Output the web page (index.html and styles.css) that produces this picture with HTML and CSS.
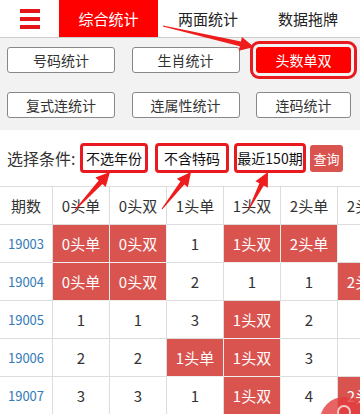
FILE: index.html
```html
<!DOCTYPE html>
<html>
<head>
<meta charset="utf-8"/>
<meta name="viewport" content="width=device-width, initial-scale=1.0"/>
<title>头数单双</title>
<link rel="stylesheet" href="styles.css">
</head>
<body>
<div id="page">

<div id="nav">
  <div class="menu"><i></i><i></i><i></i></div>
  <div class="tab on">综合统计</div>
  <div class="tab t2">两面统计</div>
  <div class="tab t3">数据拖牌</div>
</div>

<div id="btns">
  <div class="btn">号码统计</div>
  <div class="btn">生肖统计</div>
  <div class="btn cur">头数单双</div>
  <div class="btn">复式连统计</div>
  <div class="btn">连属性统计</div>
  <div class="btn">连码统计</div>
</div>

<div id="filter">
  <span class="lbl">选择条件:</span>
  <span class="sel s1">不选年份</span>
  <span class="sel s2">不含特码</span>
  <span class="sel s3">最近150期</span>
  <span class="go">查询</span>
</div>

<table id="tbl">
  <tr><th class="q">期数</th><th>0头单</th><th>0头双</th><th>1头单</th><th>1头双</th><th>2头单</th><th>2头双</th></tr>
  <tr><td class="q">19003</td><td class="r">0头单</td><td class="r">0头双</td><td>1</td><td class="r">1头双</td><td class="r">2头单</td><td>1</td></tr>
  <tr><td class="q">19004</td><td class="r">0头单</td><td class="r">0头双</td><td>2</td><td>1</td><td>1</td><td class="r">2头双</td></tr>
  <tr><td class="q">19005</td><td>1</td><td>1</td><td>3</td><td class="r">1头双</td><td>2</td><td>1</td></tr>
  <tr><td class="q">19006</td><td>2</td><td>2</td><td class="r">1头单</td><td class="r">1头双</td><td>3</td><td>2</td></tr>
  <tr><td class="q">19007</td><td>3</td><td>3</td><td>1</td><td class="r">1头双</td><td>4</td><td class="r">2头双</td></tr>
</table>

<!-- annotation arrows -->
<svg id="arrows" width="360" height="414" viewBox="0 0 360 414">
  <polygon points="162.9,26.5 239.8,46.3 238.8,50.7 254,47 241.9,37.0 240.9,41.4 163.1,25.5"/>
  <polygon points="75.4,210.3 102.4,184.0 105.7,187.0 110,172 95.4,177.6 98.7,180.6 74.6,209.7"/>
  <polygon points="162.4,209.3 184.3,184.6 187.9,187.3 191,172 176.9,178.7 180.4,181.5 161.6,208.7"/>
  <polygon points="249.4,209.2 263.8,185.6 267.8,187.7 268,172 255.4,181.3 259.4,183.3 248.6,208.8"/>
</svg>

<div id="fab"><span></span></div>

</div>
</body>
</html>
```
FILE: styles.css
```css
body {
  margin: 0;
  font-family: "Noto Sans CJK SC", "Noto Sans", sans-serif;
  color: #333;
}
#page {
  position: relative;
  width: 360px;
  height: 414px;
  overflow: hidden;
  background: #fff;
}

/* top nav */
#nav {
  display: flex;
  height: 37px;
  border-bottom: 1px solid #ccc;
}
#nav .menu {
  width: 59px;
  display: flex;
  flex-direction: column;
  align-items: center;
  justify-content: center;
  gap: 4px;
}
#nav .menu i {
  display: block;
  width: 20px;
  height: 4px;
  background: #e3141c;
}
#nav .tab {
  font-size: 15px;
  line-height: 37px;
  text-align: center;
  color: #222;
}
#nav .tab.on {
  width: 99px;
  background: #f00;
  color: #fff;
}
#nav .t2 { width: 100px; }
#nav .t3 { width: 100px; }

/* sub buttons */
#btns {
  background: #f2f2f2;
  display: grid;
  grid-template-columns: 108px 108px 95px;
  column-gap: 16.5px;
  row-gap: 19px;
  padding: 9px 0 12px 7px;
}
.btn {
  height: 24px;
  line-height: 24px;
  border: 1px solid #888;
  border-radius: 3px;
  background: #fff;
  font-size: 14px;
  text-align: center;
}
.btn.cur {
  background: #f00;
  border-color: #f00;
  color: #fff;
  outline: 3px solid #e8191f;
  outline-offset: 3px;
}

/* filter */
#filter {
  display: flex;
  align-items: center;
  height: 56px;
  padding-left: 7px;
}
#filter .lbl {
  font-size: 16px;
  width: 73px;
}
.sel {
  box-sizing: border-box;
  height: 30px;
  line-height: 24px;
  border: 3px solid #e8191f;
  border-radius: 4px;
  font-size: 14px;
  color: #111;
  text-align: center;
}
.s1 { width: 68px; }
.s2 { width: 74px; margin-left: 7px; }
.s3 { width: 72px; margin-left: 5px; }
.go {
  margin-left: 4px;
  width: 33px;
  height: 27px;
  line-height: 27px;
  border-radius: 3px;
  background: #d9534f;
  color: #fff;
  font-size: 13px;
  text-align: center;
}

/* table */
#tbl {
  border-collapse: collapse;
  table-layout: fixed;
  width: 388px;
  margin-left: -1px;
}
#tbl th, #tbl td {
  border: 1px solid #ddd;
  height: 37px;
  padding: 0;
  text-align: center;
  font-size: 15px;
  font-weight: normal;
  width: 56px;
}
#tbl .q {
  width: 52px;
  color: #337ab7;
  font-size: 13px;
}
#tbl th.q { color: #333; font-size: 15px; }
#tbl td.r {
  background: #d9534f;
  color: #fff;
  border-color: #eee;
}

/* overlays */
#arrows {
  position: absolute;
  left: 0;
  top: 0;
  pointer-events: none;
}
#arrows polygon { fill: #ee1c1c; }
#fab {
  position: absolute;
  left: 320px;
  top: 397px;
  width: 48px;
  height: 48px;
  border-radius: 50%;
  background: rgba(226, 60, 60, .8);
}
#fab span {
  position: absolute;
  left: 17px;
  top: 8px;
  width: 10px;
  height: 10px;
  border: 2px solid #f6c9c9;
  border-radius: 50%;
}
```
